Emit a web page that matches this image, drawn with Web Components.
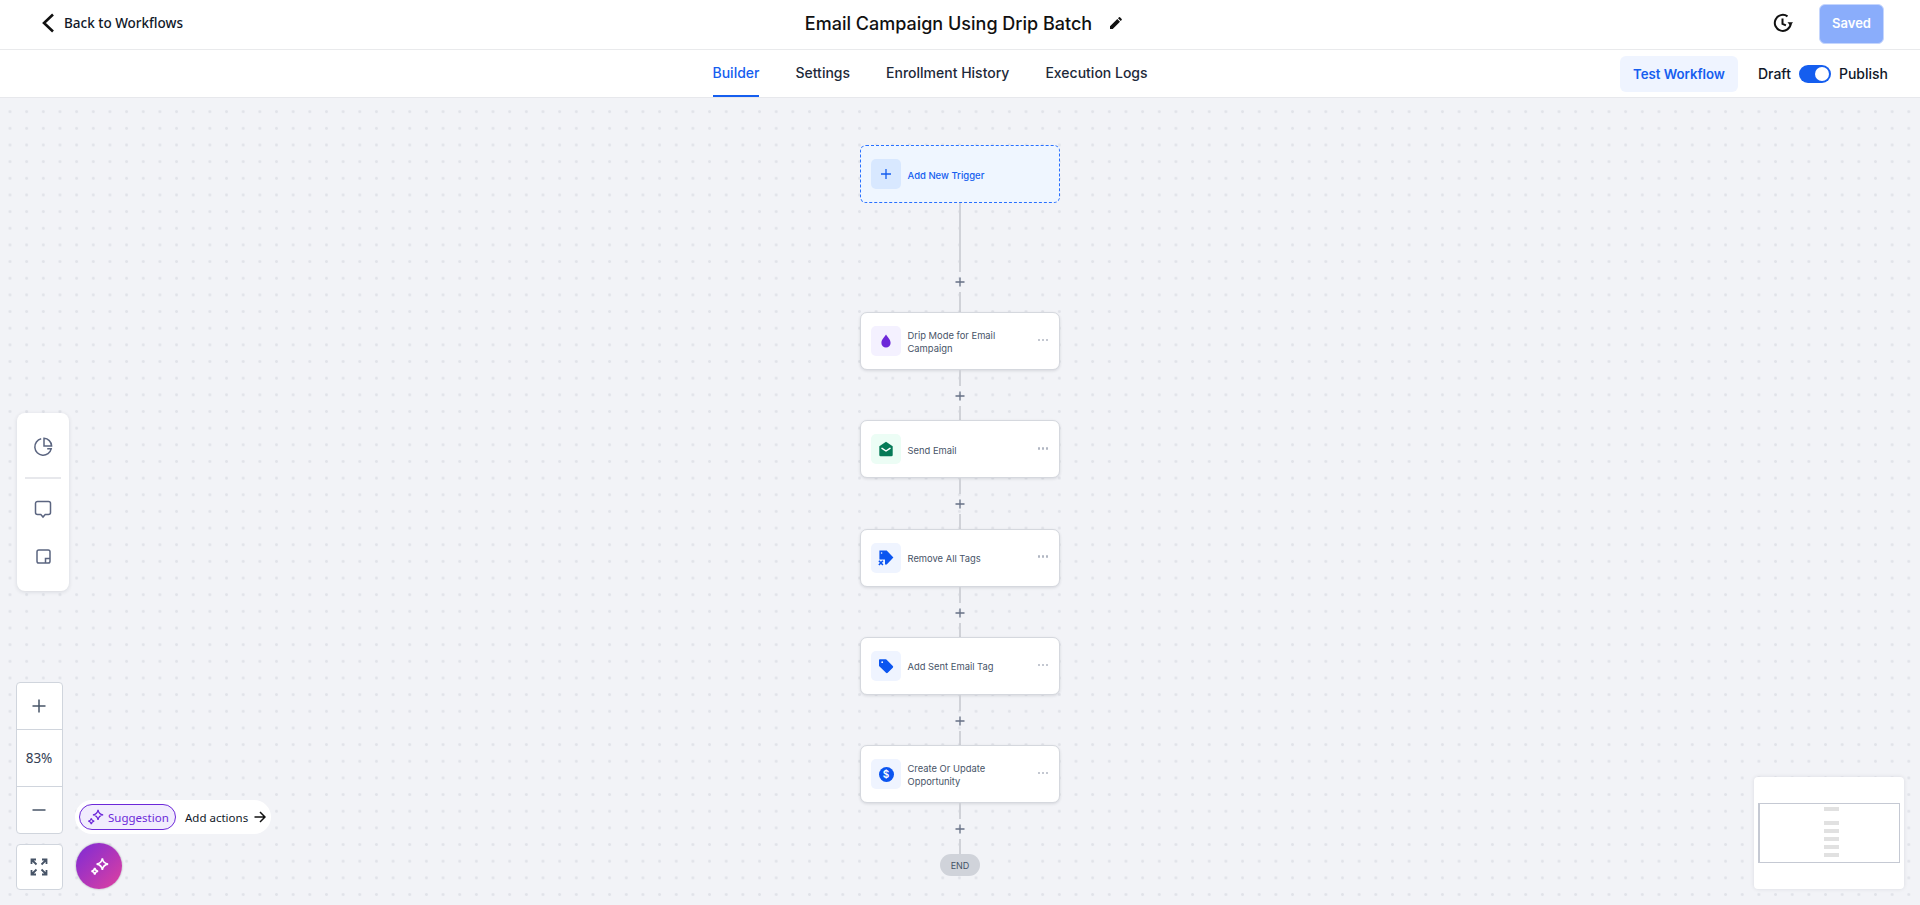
<!DOCTYPE html>
<html lang="en">
<head>
<meta charset="utf-8">
<title>Email Campaign Using Drip Batch</title>
<style>
    html, body { margin: 0; height: 100%; overflow: hidden; }
    body { display: flex; flex-direction: column; height: 905px; font-family: Inter, "Liberation Sans", sans-serif; background: #f2f3f7; }
</style>
</head>
<body>
<wf-header></wf-header>
<wf-tabs></wf-tabs>
<wf-canvas>
    <wf-trigger></wf-trigger>
    <wf-connector top="69" bottom="20"></wf-connector>
    <wf-node tint="#f4f1ff"><svg slot="icon" width="16" height="16" viewBox="0 0 16 16"><path fill="#6d28d9" d="M8 1.600C9.600 4.200 12.600 6.600 12.600 10a4.600 4.600 0 0 1-9.200 0C3.400 6.600 6.400 4.200 8 1.600z"/></svg>Drip Mode for Email<br>Campaign</wf-node>
    <wf-connector></wf-connector>
    <wf-node tint="#ecfdf5"><svg slot="icon" width="16" height="16" viewBox="0 0 16 16"><path fill="#067a57" d="M8 .8 14.700 5.200V14a1.300 1.300 0 0 1-1.300 1.300H2.600A1.300 1.300 0 0 1 1.300 14V5.200z"/><path fill="none" stroke="#fff" stroke-width="1.500" stroke-linecap="round" stroke-linejoin="round" d="M4 7.300 8 10l4-2.700"/></svg>Send Email</wf-node>
    <wf-connector></wf-connector>
    <wf-node><svg slot="icon" width="16" height="16" viewBox="0 0 16 16"><path fill="#0b55f0" d="M1.400 .6H8.700L15.400 7.600 8.700 14.600H7V9.600H1.400z"/><circle cx="3.600" cy="3" r=".8" fill="#fff"/><path fill="none" stroke="#0b55f0" stroke-width="1.600" d="M.9 10.800 4.900 15M4.900 10.800 .9 15"/></svg>Remove All Tags</wf-node>
    <wf-connector></wf-connector>
    <wf-node><svg slot="icon" width="16" height="16" viewBox="0 0 16 16"><path fill="#0b55f0" d="M1.800 1.300H7.700a1 1 0 0 1 .7.3L14.800 8a1.200 1.200 0 0 1 0 1.700L9.700 14.800a1.200 1.200 0 0 1-1.700 0L1.300 8.200a1 1 0 0 1-.3-.7V2.100a.8.8 0 0 1 .8-.8z"/><circle cx="4.200" cy="4.200" r=".9" fill="#fff"/></svg>Add Sent Email Tag</wf-node>
    <wf-connector></wf-connector>
    <wf-node><span slot="icon" style="width:15px;height:15px;border-radius:50%;background:#0b55f0;color:#fff;font:600 10px/15px Inter,sans-serif;text-align:center;display:block">$</span>Create Or Update<br>Opportunity</wf-node>
    <wf-connector top="16" bottom="15"></wf-connector>
    <wf-end></wf-end>
    <wf-side-tools slot="overlay"></wf-side-tools>
    <wf-zoom slot="overlay"></wf-zoom>
    <wf-suggestion slot="overlay"></wf-suggestion>
    <wf-minimap slot="overlay"></wf-minimap>
</wf-canvas>

<script>
// two sparkles on a diagonal, used by the suggestion pill and the round button
const SPARKLE = `<path d="M13 1c.5 3.500 2 5.300 6 6-4 .7-5.500 2.500-6 6-.5-3.500-2-5.300-6-6 4-.7 5.500-2.500 6-6z"/><path d="M5 11c.3 2 1.200 3.100 3.500 3.500C6.200 14.900 5.300 16 5 18c-.3-2-1.200-3.100-3.500-3.500C3.800 14.100 4.700 13 5 11z"/>`;
const NOTO = '"Noto Sans", Inter, sans-serif';

class WfHeader extends HTMLElement {
    constructor() {
        super();
        this.attachShadow({ mode: 'open' });
        this.shadowRoot.innerHTML = `
        <style>
            :host { display: grid; grid-template-columns: 1fr auto 1fr; align-items: center; flex: none; height: 49px; background: #fff; border-bottom: 1px solid #e9eaec; color: #101828; }
            .back { display: flex; align-items: center; gap: 9px; padding: 0 0 3px 41px; font-family: ${NOTO}; font-size: 13.500px; font-weight: 500; }
            .title { display: flex; align-items: center; gap: 17px; font-size: 18px; font-weight: 500; color: #111; margin-left: 8px; padding-bottom: 3px; }
            .right { display: flex; justify-content: flex-end; align-items: center; gap: 26px; padding-right: 36px; }
            .hist { margin-bottom: 3px; }
            .saved { width: 65px; height: 40px; margin-bottom: 1px; padding-bottom: 2px; display: flex; align-items: center; justify-content: center; box-sizing: border-box; background: #8aadfb; border: 1px solid #c5d6fd; border-radius: 6px; color: #fff; font-size: 13px; font-weight: 600; }
            svg { display: block; }
        </style>
        <div class="back">
            <svg width="14" height="20" viewBox="0 0 14 20"><path d="M12 1.500 3 10l9 8.500" fill="none" stroke="#111" stroke-width="2.600"/></svg>
            <span>Back to Workflows</span>
        </div>
        <div class="title">
            <span>Email Campaign Using Drip Batch</span>
            <svg width="14" height="14" viewBox="0 0 14 14"><path fill="#111" d="M1 10.300V13h2.700l7.300-7.300L8.300 3zM12.700 4a.8.8 0 0 0 0-1L11 1.300a.8.8 0 0 0-1 0L9 2.300 11.700 5z"/></svg>
        </div>
        <div class="right">
            <svg class="hist" width="20" height="20" viewBox="0 0 20 20" fill="none" stroke="#111" stroke-width="2"><path d="M17.800 10.500A8 8 0 1 1 14.500 3.400"/><path d="M9.500 5.600v5.200l3.400 1.500"/><path fill="#111" stroke="none" d="M14.500 9.200h5.500l-2.700 3.600z"/></svg>
            <div class="saved">Saved</div>
        </div>`;
    }
}

class WfTabs extends HTMLElement {
    constructor() {
        super();
        this.attachShadow({ mode: 'open' });
        this.shadowRoot.innerHTML = `
        <style>
            :host { display: grid; grid-template-columns: 712.500px auto 1fr; align-items: stretch; flex: none; height: 47px; background: #fff; border-bottom: 1px solid #e7e8ec; font-size: 14px; font-weight: 500; color: #1d2939; }
            nav { grid-column: 2; display: flex; gap: 36px; }
            nav span { display: flex; align-items: center; box-sizing: border-box; border-bottom: 2px solid transparent; }
            nav .on { color: #155eef; border-bottom-color: #155eef; }
            .right { display: flex; justify-content: flex-end; align-items: center; padding-right: 32px; color: #101828; }
            .test { width: 118px; height: 36px; display: flex; align-items: center; justify-content: center; background: #eff4ff; border-radius: 6px; color: #155eef; font-size: 13.200px; font-weight: 600; margin-right: 20px; }
            .toggle { width: 32px; height: 18px; border-radius: 9px; background: #155eef; margin: 0 8px; position: relative; }
            .toggle::after { content: ""; position: absolute; right: 2px; top: 2px; width: 14px; height: 14px; border-radius: 50%; background: #fff; }
        </style>
        <nav>
            <span class="on">Builder</span>
            <span>Settings</span>
            <span>Enrollment History</span>
            <span>Execution Logs</span>
        </nav>
        <div class="right">
            <div class="test">Test Workflow</div>
            <span>Draft</span><div class="toggle"></div><span>Publish</span>
        </div>`;
    }
}

class WfCanvas extends HTMLElement {
    constructor() {
        super();
        this.attachShadow({ mode: 'open' });
        this.shadowRoot.innerHTML = `
        <style>
            :host { display: flex; flex-direction: column; align-items: center; flex: 1; min-height: 0; position: relative; overflow: hidden; box-sizing: border-box; padding-top: 47px;
                background-color: #f2f3f7;
                background-image: radial-gradient(circle, #e1e3e9 1.200px, transparent 1.600px);
                background-size: 16.667px 16.667px;
                background-position: 1.670px 5.330px; }
        </style>
        <slot></slot>
        <slot name="overlay"></slot>`;
    }
}

class WfTrigger extends HTMLElement {
    constructor() {
        super();
        this.attachShadow({ mode: 'open' });
        this.shadowRoot.innerHTML = `
        <style>
            :host { display: flex; align-items: center; gap: 6.500px; box-sizing: border-box; width: 200px; height: 58px; flex: none; padding-left: 10px; background: #eff6ff; border: 1px dashed #2970ff; border-radius: 6px; color: #155eef; font-size: 9.500px; font-weight: 500; }
            .ic { width: 30px; height: 30px; border-radius: 5px; background: #d8e8ff; display: flex; align-items: center; justify-content: center; }
            span { padding-top: 3px; }
            svg { display: block; }
        </style>
        <div class="ic"><svg width="12" height="12" viewBox="0 0 12 12"><path d="M6 1v10M1 6h10" stroke="#155eef" stroke-width="1.300"/></svg></div>
        <span>Add New Trigger</span>`;
    }
}

class WfNode extends HTMLElement {
    constructor() {
        super();
        this.attachShadow({ mode: 'open' });
        const tint = this.getAttribute('tint') || '#eff4ff';
        this.shadowRoot.innerHTML = `
        <style>
            :host { display: flex; align-items: center; gap: 6.500px; box-sizing: border-box; width: 200px; height: 58px; flex: none; padding: 0 11px 0 10px; background: #fff; border: 1px solid #d5d8de; border-radius: 7px; box-shadow: 0 1px 3px rgba(16,24,40,.12); color: #475467; font-size: 9.400px; line-height: 13px; }
            .ic { width: 30px; height: 30px; flex: none; border-radius: 5px; background: ${tint}; display: flex; align-items: center; justify-content: center; }
            .txt { flex: 1; padding-top: 2px; }
            .more { display: flex; gap: 1.500px; margin-bottom: 2px; }
            .more i { width: 2.500px; height: 2.500px; border-radius: 50%; background: #b0b6c2; }
        </style>
        <div class="ic"><slot name="icon"></slot></div>
        <div class="txt"><slot></slot></div>
        <div class="more"><i></i><i></i><i></i></div>`;
    }
}

class WfConnector extends HTMLElement {
    constructor() {
        super();
        this.attachShadow({ mode: 'open' });
        const top = this.getAttribute('top') || '16';
        const bottom = this.getAttribute('bottom') || '14.300';
        this.shadowRoot.innerHTML = `
        <style>
            :host { display: flex; flex-direction: column; align-items: center; flex: none; }
            .line { width: 2px; background: #d0d2d8; }
            .plus { height: 20px; display: flex; align-items: center; }
            svg { display: block; }
        </style>
        <div class="line" style="height:${top}px"></div>
        <div class="plus"><svg width="10" height="10" viewBox="0 0 10 10"><path d="M5 .5v9M.5 5h9" stroke="#667085" stroke-width="1.300"/></svg></div>
        <div class="line" style="height:${bottom}px"></div>`;
    }
}

class WfEnd extends HTMLElement {
    constructor() {
        super();
        this.attachShadow({ mode: 'open' });
        this.shadowRoot.innerHTML = `
        <style>
            :host { display: flex; align-items: center; justify-content: center; flex: none; width: 40px; height: 22px; border-radius: 11px; background: #d0d3da; color: #475467; font-size: 9px; }
        </style>
        END`;
    }
}

class WfSideTools extends HTMLElement {
    constructor() {
        super();
        this.attachShadow({ mode: 'open' });
        this.shadowRoot.innerHTML = `
        <style>
            :host { position: absolute; left: 17px; top: 315px; width: 52px; height: 178px; display: flex; flex-direction: column; align-items: center; box-sizing: border-box; padding-top: 24px; background: #fff; border-radius: 8px; box-shadow: 0 1px 4px rgba(16,24,40,.12); }
            svg { display: block; fill: none; stroke: #5b6580; stroke-width: 1.500; }
            hr { flex: none; width: 36px; height: 2px; border: 0; margin: 20px 0 21px; background: #e7e8ec; }
        </style>
        <svg width="20" height="20" viewBox="0 0 20 20"><path d="M8.200 1.800a8.300 8.300 0 1 0 10 10h-4"/><path d="M11 1.300a8 8 0 0 1 7.600 7.600H11z"/></svg>
        <hr>
        <svg width="18" height="19" viewBox="0 0 18 19"><path d="M3.500 1.500h11a2 2 0 0 1 2 2v9a2 2 0 0 1-2 2h-3.300L9 17l-2.200-2.500H3.500a2 2 0 0 1-2-2v-9a2 2 0 0 1 2-2z"/></svg>
        <svg style="margin-top:30px" width="15" height="15" viewBox="0 0 15 15"><rect x="1" y="1" width="13" height="13" rx="1.800"/><path d="M14 9.500H9.500V14"/></svg>`;
    }
}

class WfZoom extends HTMLElement {
    constructor() {
        super();
        this.attachShadow({ mode: 'open' });
        this.shadowRoot.innerHTML = `
        <style>
            :host { position: absolute; left: 15.500px; top: 584px; width: 47px; display: flex; flex-direction: column; gap: 10px; color: #344054; font-family: ${NOTO}; font-size: 13.500px; }
            .box { display: flex; flex-direction: column; box-sizing: border-box; background: #fff; border: 1px solid #d0d5dd; border-radius: 4px; }
            .box > div { display: flex; align-items: center; justify-content: center; height: 46px; }
            .box > div + div { border-top: 1px solid #d0d5dd; }
            .box > .pct { height: 56px; }
            svg { display: block; }
        </style>
        <div class="box">
            <div><svg width="14" height="14" viewBox="0 0 14 14"><path d="M7 .5v13M.5 7h13" stroke="#475467" stroke-width="1.500"/></svg></div>
            <div class="pct">83%</div>
            <div><svg width="14" height="14" viewBox="0 0 14 14"><path d="M.5 7h13" stroke="#475467" stroke-width="1.500"/></svg></div>
        </div>
        <div class="box" style="height:46px;align-items:center;justify-content:center">
            <svg width="18" height="18" viewBox="0 0 18 18" fill="none" stroke="#475467" stroke-width="1.800"><path d="M1.500 6V1.500H6M1.500 1.500 6.500 6.500M12 1.500h4.500V6M16.500 1.500 11.500 6.500M1.500 12v4.500H6M1.500 16.500 6.500 11.500M16.500 12v4.500H12M16.500 16.500 11.500 11.500"/></svg>
        </div>`;
    }
}

class WfSuggestion extends HTMLElement {
    constructor() {
        super();
        this.attachShadow({ mode: 'open' });
        this.shadowRoot.innerHTML = `
        <style>
            :host { position: absolute; left: 75px; top: 702px; width: 196px; height: 34px; display: flex; align-items: center; box-sizing: border-box; padding-left: 4px; background: #fff; border-radius: 17px; color: #101828; font-family: ${NOTO}; font-size: 11.500px; }
            .pill { display: flex; align-items: center; gap: 4px; box-sizing: border-box; width: 97px; height: 26px; padding-left: 7px; border: 1px solid #6d28d9; border-radius: 13px; background: #f1ecfd; color: #6d28d9; margin-right: 9px; white-space: nowrap; }
            .pill svg { fill: none; stroke: #6d28d9; stroke-width: 1.500; }
            .arrow { margin-left: 6px; }
            .fab { position: absolute; left: 1px; top: 43px; width: 46px; height: 46px; border-radius: 50%; background: linear-gradient(135deg, #7c2bd6, #e0409f); box-shadow: 0 0 2px rgba(16,24,40,.4); display: flex; align-items: center; justify-content: center; }
            .fab svg { fill: none; stroke: #fff; stroke-width: 1.700; }
            svg { display: block; }
        </style>
        <div class="pill"><svg width="17" height="16" viewBox="0 0 20 19">${SPARKLE}</svg><span>Suggestion</span></div>
        <span>Add actions</span>
        <svg class="arrow" width="12" height="12" viewBox="0 0 12 12" fill="none" stroke="#111" stroke-width="1.500"><path d="M.5 6h10M6 1l5 5-5 5"/></svg>
        <div class="fab"><svg width="19" height="19" viewBox="0 0 20 19">${SPARKLE}</svg></div>`;
    }
}

class WfMinimap extends HTMLElement {
    constructor() {
        super();
        this.attachShadow({ mode: 'open' });
        this.shadowRoot.innerHTML = `
        <style>
            :host { position: absolute; left: 1754px; top: 679px; width: 150px; height: 112px; display: flex; align-items: center; justify-content: center; background: #fff; border-radius: 4px; box-shadow: 0 0 4px rgba(16,24,40,.1); }
            .view { box-sizing: border-box; width: 142px; height: 60px; border: 1px solid #c5c9d3; border-left-width: 2px; display: flex; flex-direction: column; align-items: center; padding: 3px 0 0 3px; overflow: hidden; }
            .view i { flex: none; width: 15px; height: 4px; margin-bottom: 4px; background: #e1e1e1; }
            .view i:first-child { margin-bottom: 10px; }
            .view i:last-child { height: 1px; margin: 2px 0 0; }
        </style>
        <div class="view"><i></i><i></i><i></i><i></i><i></i><i></i><i></i></div>`;
    }
}

customElements.define('wf-header', WfHeader);
customElements.define('wf-tabs', WfTabs);
customElements.define('wf-canvas', WfCanvas);
customElements.define('wf-trigger', WfTrigger);
customElements.define('wf-node', WfNode);
customElements.define('wf-connector', WfConnector);
customElements.define('wf-end', WfEnd);
customElements.define('wf-side-tools', WfSideTools);
customElements.define('wf-zoom', WfZoom);
customElements.define('wf-suggestion', WfSuggestion);
customElements.define('wf-minimap', WfMinimap);
</script>
</body>
</html>
